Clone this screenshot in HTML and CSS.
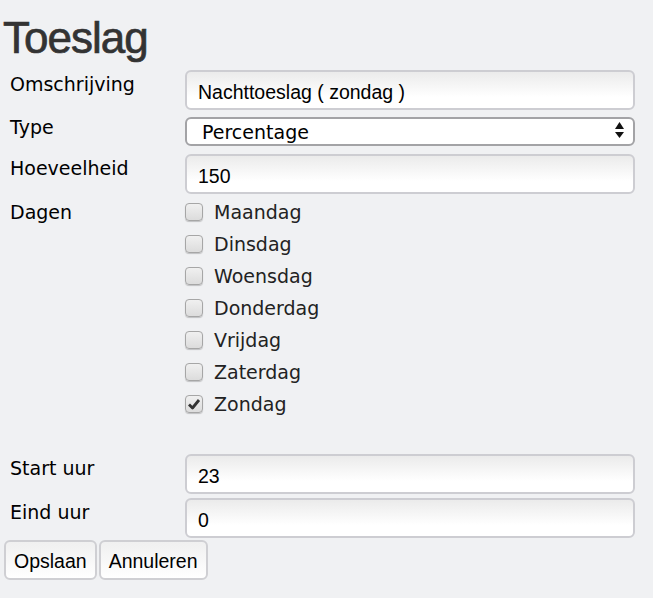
FILE: index.html
```html
<!DOCTYPE html>
<html lang="nl">
<head>
<meta charset="utf-8">
<title>Toeslag</title>
<link rel="stylesheet" href="styles.css">
</head>
<body>
<div class="page">
  <h1 class="title">Toeslag</h1>
  <form class="form">
    <div class="row r-omschr">
      <label class="lbl">Omschrijving</label>
      <input class="field" type="text" value="Nachttoeslag ( zondag )">
    </div>
    <div class="row r-type">
      <label class="lbl lbl-select">Type</label>
      <div class="select-wrap">
        <select class="select"><option>Percentage</option></select>
        <svg class="arrows" width="9" height="16" viewBox="0 0 9 16"><polygon points="0,7 4.5,0 9,7" fill="#111"/><polygon points="0,10 9,10 4.5,16" fill="#111"/></svg>
      </div>
    </div>
    <div class="row r-hoev">
      <label class="lbl">Hoeveelheid</label>
      <input class="field" type="text" value="150">
    </div>
    <div class="row r-dagen">
      <span class="lbl lbl-days">Dagen</span>
      <div class="days">
        <label class="day"><span class="box"></span>Maandag</label>
        <label class="day"><span class="box"></span>Dinsdag</label>
        <label class="day"><span class="box"></span>Woensdag</label>
        <label class="day"><span class="box"></span>Donderdag</label>
        <label class="day"><span class="box"></span>Vrijdag</label>
        <label class="day"><span class="box"></span>Zaterdag</label>
        <label class="day"><span class="box"><svg width="14" height="14" viewBox="0 0 14 14"><polyline points="2,7.5 5.5,11 12,3" fill="none" stroke="#333" stroke-width="2.8" stroke-linejoin="round"/></svg></span>Zondag</label>
      </div>
    </div>
    <div class="row r-start">
      <label class="lbl">Start uur</label>
      <input class="field" type="text" value="23">
    </div>
    <div class="row r-eind">
      <label class="lbl">Eind uur</label>
      <input class="field" type="text" value="0">
    </div>
    <div class="buttons">
      <button class="btn" type="button">Opslaan</button>
      <button class="btn" type="button">Annuleren</button>
    </div>
  </form>
</div>
</body>
</html>
```
FILE: styles.css
```css
body {
  margin: 0;
  background: #f0f1f3;
}

.page {
  padding: 13px 0 0 4px;
}

.title {
  margin: 0 0 0 -1px;
  font: 400 44px/50px "Liberation Sans", Arial, sans-serif;
  letter-spacing: -1px;
  color: #333;
  -webkit-text-stroke: 0.7px #333;
}

.row {
  display: flex;
  align-items: flex-start;
}

.lbl {
  flex: none;
  width: 175px;
  padding: 3px 0 0 6px;
  font: 19px/22px "DejaVu Sans", Verdana, sans-serif;
  color: #000;
}

.field {
  width: 450px;
  height: 40px;
  box-sizing: border-box;
  margin: 0;
  padding: 4px 11px 0;
  border: 2px solid #cdcdd2;
  border-radius: 6px;
  background: linear-gradient(#ebebeb, #fff 70%);
  font: 19.5px "Liberation Sans", Arial, sans-serif;
  color: #000;
  outline: none;
}

.r-omschr { margin-top: 7px; }
.r-type { margin-top: 7px; }
.r-hoev { margin-top: 8px; }
.r-dagen { margin-top: 2px; }
.r-start { margin-top: 34px; }
.r-eind { margin-top: 4px; }

.lbl-select {
  padding-top: 0;
  margin-top: -1px;
}

.select-wrap {
  position: relative;
  width: 450px;
  height: 29px;
}

.select {
  appearance: none;
  -webkit-appearance: none;
  width: 100%;
  height: 29px;
  box-sizing: border-box;
  margin: 0;
  padding: 0 0 0 15px;
  border: 2px solid #a3a3a6;
  border-radius: 6px;
  background: #fff;
  font: 19px "DejaVu Sans", Verdana, sans-serif;
  color: #000;
  outline: none;
}

.arrows {
  position: absolute;
  right: 11px;
  top: 5px;
  pointer-events: none;
}

.lbl-days {
  padding-top: 5px;
}

.days {
  display: flex;
  flex-direction: column;
}

.day {
  display: flex;
  align-items: center;
  gap: 11px;
  height: 32px;
  font: 19px "DejaVu Sans", Verdana, sans-serif;
  color: #222;
}

.box {
  width: 18px;
  height: 18px;
  box-sizing: border-box;
  border: 1px solid #a6a6a6;
  border-radius: 4px;
  background: linear-gradient(#f0f0f0, #dcdcdc);
  box-shadow: 0 1px 1px rgba(0, 0, 0, 0.2);
  display: flex;
  align-items: center;
  justify-content: center;
}

.buttons {
  display: flex;
  gap: 2px;
  margin-top: 2px;
}

.btn {
  height: 40px;
  box-sizing: border-box;
  margin: 0;
  padding: 2px 8px 0;
  border: 2px solid #cfcfd3;
  border-radius: 6px;
  background: linear-gradient(#f0f0f0, #fff);
  font: 19.5px "Liberation Sans", Arial, sans-serif;
  color: #000;
}
```
